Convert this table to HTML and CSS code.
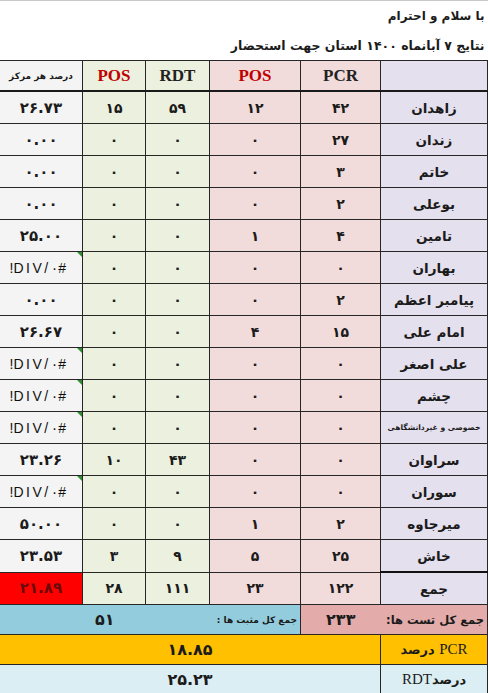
FILE: index.html
```html
<!DOCTYPE html>
<html lang="fa" dir="rtl">
<head>
<meta charset="utf-8">
<title>نتایج</title>
<link rel="stylesheet" href="styles.css">
</head>
<body>
<table class="sheet">
  <colgroup>
    <col class="c-name"><col class="c-pcr"><col class="c-pos1"><col class="c-rdt"><col class="c-pos2"><col class="c-pct">
  </colgroup>
  <tbody>
    <tr class="title-row first"><td colspan="6" class="title t1">با سلام و احترام</td></tr>
    <tr class="title-row"><td colspan="6" class="title t2">نتایج ۷ آبانماه ۱۴۰۰ استان جهت استحضار</td></tr>
    <tr class="head-row">
      <td class="name"></td>
      <td class="pink lat">PCR</td>
      <td class="pink lat red">POS</td>
      <td class="green lat">RDT</td>
      <td class="green lat red">POS</td>
      <td class="pct small">درصد هر مرکز</td>
    </tr>
    <tr class="row"><td class="name">زاهدان</td><td class="pink">۴۲</td><td class="pink">۱۲</td><td class="green">۵۹</td><td class="green">۱۵</td><td class="pct">۲۶.۷۳</td></tr>
    <tr class="row"><td class="name">زندان</td><td class="pink">۲۷</td><td class="pink">۰</td><td class="green">۰</td><td class="green">۰</td><td class="pct">۰.۰۰</td></tr>
    <tr class="row"><td class="name">خاتم</td><td class="pink">۳</td><td class="pink">۰</td><td class="green">۰</td><td class="green">۰</td><td class="pct">۰.۰۰</td></tr>
    <tr class="row"><td class="name">بوعلی</td><td class="pink">۲</td><td class="pink">۰</td><td class="green">۰</td><td class="green">۰</td><td class="pct">۰.۰۰</td></tr>
    <tr class="row"><td class="name">تامین</td><td class="pink">۴</td><td class="pink">۱</td><td class="green">۰</td><td class="green">۰</td><td class="pct">۲۵.۰۰</td></tr>
    <tr class="row"><td class="name">بهاران</td><td class="pink">۰</td><td class="pink">۰</td><td class="green">۰</td><td class="green">۰</td><td class="pct err">#DIV/۰!</td></tr>
    <tr class="row"><td class="name">پیامبر اعظم</td><td class="pink">۲</td><td class="pink">۰</td><td class="green">۰</td><td class="green">۰</td><td class="pct">۰.۰۰</td></tr>
    <tr class="row"><td class="name">امام علی</td><td class="pink">۱۵</td><td class="pink">۴</td><td class="green">۰</td><td class="green">۰</td><td class="pct">۲۶.۶۷</td></tr>
    <tr class="row"><td class="name">علی اصغر</td><td class="pink">۰</td><td class="pink">۰</td><td class="green">۰</td><td class="green">۰</td><td class="pct err">#DIV/۰!</td></tr>
    <tr class="row"><td class="name">چشم</td><td class="pink">۰</td><td class="pink">۰</td><td class="green">۰</td><td class="green">۰</td><td class="pct err">#DIV/۰!</td></tr>
    <tr class="row"><td class="name tiny">خصوصی و غیردانشگاهی</td><td class="pink">۰</td><td class="pink">۰</td><td class="green">۰</td><td class="green">۰</td><td class="pct err">#DIV/۰!</td></tr>
    <tr class="row"><td class="name">سراوان</td><td class="pink">۰</td><td class="pink">۰</td><td class="green">۴۳</td><td class="green">۱۰</td><td class="pct">۲۳.۲۶</td></tr>
    <tr class="row"><td class="name">سوران</td><td class="pink">۰</td><td class="pink">۰</td><td class="green">۰</td><td class="green">۰</td><td class="pct err">#DIV/۰!</td></tr>
    <tr class="row"><td class="name">میرجاوه</td><td class="pink">۲</td><td class="pink">۱</td><td class="green">۰</td><td class="green">۰</td><td class="pct">۵۰.۰۰</td></tr>
    <tr class="row"><td class="name thick">خاش</td><td class="pink">۲۵</td><td class="pink">۵</td><td class="green">۹</td><td class="green">۳</td><td class="pct">۲۳.۵۳</td></tr>
    <tr class="row"><td class="name">جمع</td><td class="pink">۱۲۲</td><td class="pink">۲۳</td><td class="green">۱۱۱</td><td class="green">۲۸</td><td class="pct alert">۲۱.۸۹</td></tr>
    <tr class="sum-row">
      <td class="rose lbl-big">جمع کل تست ها:</td>
      <td class="rose val">۲۳۳</td>
      <td class="sky lbl-small">جمع کل مثبت ها :</td>
      <td colspan="3" class="sky val">۵۱</td>
    </tr>
    <tr class="sum-row">
      <td class="amber lbl"><span class="lat-n">PCR</span> درصد</td>
      <td colspan="5" class="amber val big">۱۸.۸۵</td>
    </tr>
    <tr class="sum-row last">
      <td class="ice lbl">درصد<span class="lat-n">RDT</span></td>
      <td colspan="5" class="ice val big">۲۵.۲۳</td>
    </tr>
  </tbody>
</table>
</body>
</html>
```
FILE: styles.css
```css
html, body {
  margin: 0;
  padding: 0;
  background: #ffffff;
}
body {
  width: 488px;
  height: 693px;
  overflow: hidden;
  font-family: "DejaVu Sans", sans-serif;
  color: #1b1b1b;
}
.sheet {
  width: 488px;
  table-layout: fixed;
  border-collapse: collapse;
  direction: rtl;
}
.c-name { width: 107px; }
.c-pcr { width: 80px; }
.c-pos1 { width: 91px; }
.c-rdt { width: 64px; }
.c-pos2 { width: 63px; }
.c-pct { width: 83px; }

.sheet td {
  border: 1px solid #262626;
  padding: 0;
  text-align: center;
  vertical-align: middle;
  font-weight: bold;
  font-size: 14px;
  white-space: nowrap;
  overflow: hidden;
}
.title-row td.title {
  border-top: none;
  border-right: none;
  border-bottom: none;
  text-align: right;
  padding-right: 3px;
  background: #ffffff;
}
.title-row.first td.title { border-top: 1px solid #c8c8c8; }
.t1 { height: 29px; font-size: 12px !important; }
.t2 { height: 30px; font-size: 12.5px !important; }

.head-row td { height: 29px; border-bottom: 2px solid #1a1a1a; }
.row td { height: 31px; }

.name { background: #e5e0ee; font-size: 13.5px !important; }
.pink { background: #f2dcdb; }
.green { background: #ebf1de; }
.pct { background: #f4f4f4; position: relative; font-size: 15px !important; }

.lat {
  font-family: "Liberation Serif", serif;
  font-size: 17px !important;
  color: #222;
}
.red { color: #c00000; }
.pct.small { font-size: 9px !important; }
.name.tiny { font-size: 7.6px !important; }
.thick { border-bottom: 2px solid #111 !important; }

.err {
  font-family: "Liberation Sans", "DejaVu Sans", sans-serif;
  font-weight: normal !important;
  font-size: 14px !important;
  letter-spacing: 2.5px;
  padding-right: 4px !important;
  color: #111;
}
.err::after {
  content: "";
  position: absolute;
  top: 0;
  right: 0;
  width: 0;
  height: 0;
  border-top: 5px solid #2e8b2e;
  border-left: 5px solid transparent;
}
.alert { background: #ff0000; color: #6a0a0a; }

.sum-row td { height: 29px; }
.rose { background: #e3abaa; }
.sky { background: #93cddd; }
.amber { background: #ffc000; }
.ice { background: #daeef3; }
.lbl-big {
  text-align: right !important;
  padding-right: 3px !important;
  font-size: 11.5px !important;
  border-left-style: hidden !important;
}
.lbl-small {
  text-align: right !important;
  padding-right: 3px !important;
  font-size: 9px !important;
  border-left-style: hidden !important;
}
.rose.val { font-size: 16px; border-right-style: hidden; }
.sky.val { font-size: 16px; border-right-style: hidden; }
.lbl { font-size: 13px !important; }
.lat-n { font-family: "Liberation Serif", serif; font-weight: normal; font-size: 15px; }
.big { font-size: 16px !important; }
.last td { border-bottom: 1px solid #262626; }
```
